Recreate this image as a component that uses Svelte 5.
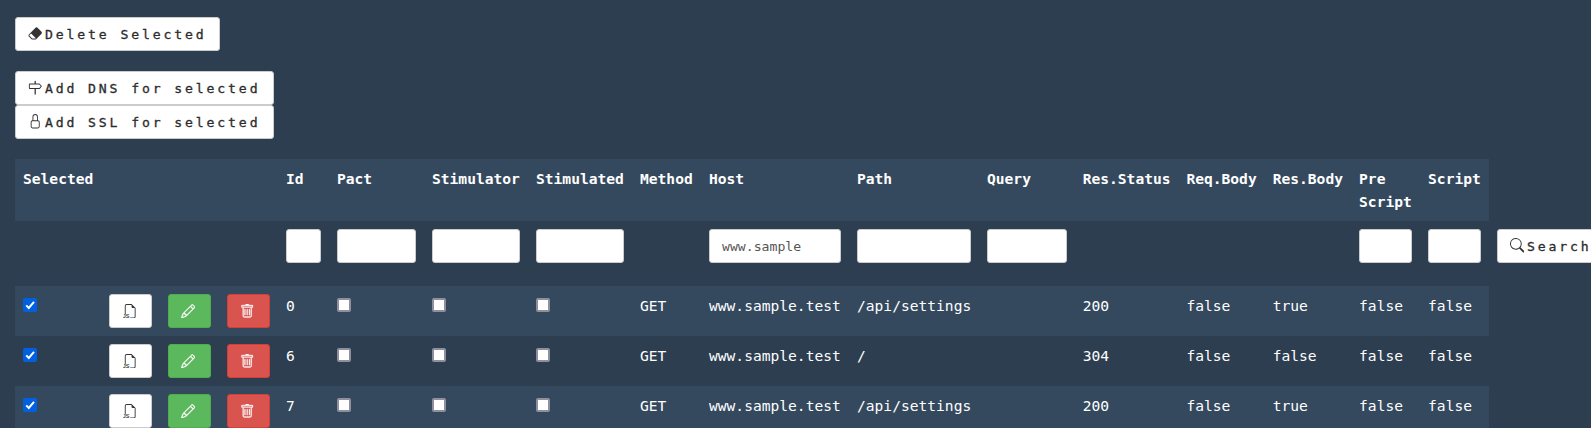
<script>
  const headers = ['Selected', '', '', '', 'Id', 'Pact', 'Stimulator', 'Stimulated', 'Method', 'Host', 'Path', 'Query', 'Res.Status', 'Req.Body', 'Res.Body', 'Pre Script', 'Script'];
  const filters = [null, null, null, null, '', '', '', '', null, 'www.sample', '', '', null, null, null, '', ''];
  const rows = [
    { id: 0, path: '/api/settings', status: 200, req: 'false', res: 'true' },
    { id: 6, path: '/', status: 304, req: 'false', res: 'false' },
    { id: 7, path: '/api/settings', status: 200, req: 'false', res: 'true' }
  ];
  const icons = {
    eraser: 'M8.086 2.207a2 2 0 0 1 2.828 0l3.879 3.879a2 2 0 0 1 0 2.828l-5.5 5.5A2 2 0 0 1 7.879 15H5.12a2 2 0 0 1-1.414-.586l-2.5-2.5a2 2 0 0 1 0-2.828zm.66 11.34L3.453 8.254 1.914 9.793a1 1 0 0 0 0 1.414l2.5 2.5a1 1 0 0 0 .707.293H7.88a1 1 0 0 0 .707-.293z',
    signpost: 'M7.3 1.414V4H2a1 1 0 0 0-1 1v4a1 1 0 0 0 1 1h5.3v6h1.4v-6h3.832a1 1 0 0 0 .768-.36l1.933-2.32a.5.5 0 0 0 0-.64L13.3 4.36a1 1 0 0 0-.768-.36H8.7V1.414a.7.7 0 0 0-1.4 0M12.532 5l1.666 2-1.666 2H2V5z',
    lock: 'M8 1a2 2 0 0 1 2 2v4H6V3a2 2 0 0 1 2-2m3 6V3a3 3 0 0 0-6 0v4a2 2 0 0 0-2 2v5a2 2 0 0 0 2 2h6a2 2 0 0 0 2-2V9a2 2 0 0 0-2-2M5 8h6a1 1 0 0 1 1 1v5a1 1 0 0 1-1 1H5a1 1 0 0 1-1-1V9a1 1 0 0 1 1-1',
    pencil: 'M12.146.146a.5.5 0 0 1 .708 0l3 3a.5.5 0 0 1 0 .708l-10 10a.5.5 0 0 1-.168.11l-5 2a.5.5 0 0 1-.65-.65l2-5a.5.5 0 0 1 .11-.168zM11.207 2.5 13.5 4.793 14.793 3.5 12.5 1.207zm1.586 3L10.5 3.207 4 9.707V10h.5a.5.5 0 0 1 .5.5v.5h.5a.5.5 0 0 1 .5.5v.5h.293zm-9.761 5.175-.106.106-1.528 3.821 3.821-1.528.106-.106A.5.5 0 0 1 5 12.5V12h-.5a.5.5 0 0 1-.5-.5V11h-.5a.5.5 0 0 1-.468-.325',
    trash: 'M5.5 5.5A.5.5 0 0 1 6 6v6a.5.5 0 0 1-1 0V6a.5.5 0 0 1 .5-.5m2.5 0a.5.5 0 0 1 .5.5v6a.5.5 0 0 1-1 0V6a.5.5 0 0 1 .5-.5m3 .5a.5.5 0 0 0-1 0v6a.5.5 0 0 0 1 0zM14.5 3a1 1 0 0 1-1 1H13v9a2 2 0 0 1-2 2H5a2 2 0 0 1-2-2V4h-.5a1 1 0 0 1-1-1V2a1 1 0 0 1 1-1H6a1 1 0 0 1 1-1h2a1 1 0 0 1 1 1h3.5a1 1 0 0 1 1 1zM4.118 4 4 4.059V13a1 1 0 0 0 1 1h6a1 1 0 0 0 1-1V4.059L11.882 4zM2.5 3h11V2h-11z',
    search: 'M11.742 10.344a6.5 6.5 0 1 0-1.397 1.398h-.001q.044.06.098.115l3.85 3.85a1 1 0 0 0 1.415-1.414l-3.85-3.85a1 1 0 0 0-.115-.1zM12 6.5a5.5 5.5 0 1 1-11 0 5.5 5.5 0 0 1 11 0',
    file: 'M14 4.5V14a2 2 0 0 1-2 2H8v-1h4a1 1 0 0 0 1-1V4.5h-2A1.5 1.5 0 0 1 9.5 3V1H4a1 1 0 0 0-1 1v9H2V2a2 2 0 0 1 2-2h5.5z'
  };
</script>

{#snippet icon(name)}
  <svg class="icon {name}" viewBox="0 0 16 16" aria-hidden="true">
    <path d={icons[name]} />
    {#if name === 'file'}<text x="0" y="15.8">JS</text>{/if}
  </svg>
{/snippet}

{#snippet check(on)}
  <span class="check" class:on>
    {#if on}<svg viewBox="0 0 14 14"><path d="M3.2 7.4 5.8 10 11 3.9" /></svg>{/if}
  </span>
{/snippet}

<main>
  <button class="btn">{@render icon('eraser')}<span>Delete Selected</span></button>
  <div class="group">
    <button class="btn">{@render icon('signpost')}<span>Add DNS for selected</span></button>
    <button class="btn">{@render icon('lock')}<span>Add SSL for selected</span></button>
  </div>

  <div class="table">
    <div class="row head">
      {#each headers as h}<div class="cell">{h}</div>{/each}
    </div>
    <div class="row filter">
      {#each filters as f}
        <div class="cell">{#if f !== null}<input value={f} />{/if}</div>
      {/each}
      <div class="cell"><button class="btn">{@render icon('search')}<span>Search</span></button></div>
    </div>
    {#each rows as r, i}
      <div class="row data" class:striped={i % 2 === 0}>
        <div class="cell">{@render check(true)}</div>
        <div class="cell"><button class="btn act">{@render icon('file')}</button></div>
        <div class="cell"><button class="btn act green">{@render icon('pencil')}</button></div>
        <div class="cell"><button class="btn act red">{@render icon('trash')}</button></div>
        <div class="cell">{r.id}</div>
        <div class="cell">{@render check(false)}</div>
        <div class="cell">{@render check(false)}</div>
        <div class="cell">{@render check(false)}</div>
        <div class="cell">GET</div>
        <div class="cell">www.sample.test</div>
        <div class="cell">{r.path}</div>
        <div class="cell"></div>
        <div class="cell">{r.status}</div>
        <div class="cell">{r.req}</div>
        <div class="cell">{r.res}</div>
        <div class="cell">false</div>
        <div class="cell">false</div>
      </div>
    {/each}
  </div>
</main>

<style>
  :global(body) { background: #2c3e50; overflow: hidden; }
  main {
    box-sizing: border-box;
    height: 428px;
    overflow: hidden;
    padding: 17px 0 0 15px;
    display: flex;
    flex-direction: column;
    align-items: flex-start;
    background: #2c3e50;
    color: #fff;
    font: 14.6px/23px Consolas, "DejaVu Sans Mono", monospace;
  }
  .btn {
    box-sizing: border-box;
    height: 34px;
    display: flex;
    align-items: center;
    flex: none;
    margin: 0;
    padding: 0 12.7px 0 12px;
    border: 1px solid #ccc;
    border-radius: 3px;
    background: #fff;
    color: #333;
    font: 13.15px/20px Consolas, "DejaVu Sans Mono", monospace;
    letter-spacing: 2.86px;
    white-space: nowrap;
  }
  .btn span { padding-top: 1px; -webkit-text-stroke: 0.3px #222; }
  .icon { width: 14.4px; height: 14.4px; margin: 0 2.6px 1px 0; fill: currentColor; flex: none; }
  .icon text { font: 6px "Liberation Sans", sans-serif; letter-spacing: 0; stroke: currentColor; stroke-width: 0.2; }
  .pencil, .trash { stroke: currentColor; stroke-width: 0.3; }
  .group { display: flex; flex-direction: column; align-items: flex-start; margin: 20px 0; }
  .table { width: 1474px; }
  .row {
    display: grid;
    grid-template-columns: 86px 59px 59px 59px 51px 95px 104px 104px 69px 148px 130px 95.7px 103.7px 86.3px 86.4px 69px 68.9px 130px;
    width: 1474px;
    box-sizing: border-box;
  }
  .cell { padding: 8px; min-width: 0; box-sizing: border-box; }
  .head { height: 62px; background: #34495e; font-weight: bold; }
  .filter { height: 65px; }
  .data { height: 50px; }
  .striped { background: #34495e; }
  input {
    display: block;
    box-sizing: border-box;
    width: 100%;
    height: 34px;
    padding: 0 12px;
    border: 1px solid #ccc;
    border-radius: 3px;
    background: #fff;
    color: #555;
    font: 13.15px/20px Consolas, "DejaVu Sans Mono", monospace;
  }
  .act { width: 43px; justify-content: center; padding: 0; }
  .act .icon { margin: 0 2.6px 0 0; }
  .act .file { margin-right: 1.6px; }
  .green { background: #5cb85c; border-color: #4cae4c; color: #fff; }
  .red { background: #d9534f; border-color: #d43f3a; color: #fff; }
  .check {
    display: block;
    box-sizing: border-box;
    width: 14px;
    height: 14px;
    margin-top: 4px;
    border: 2px solid #8f8f9d;
    border-radius: 2px;
    background: #fff;
  }
  .check.on { border: 0; background: #0060df; }
  .check svg { display: block; width: 14px; height: 14px; fill: none; stroke: #fff; stroke-width: 2; }
</style>
